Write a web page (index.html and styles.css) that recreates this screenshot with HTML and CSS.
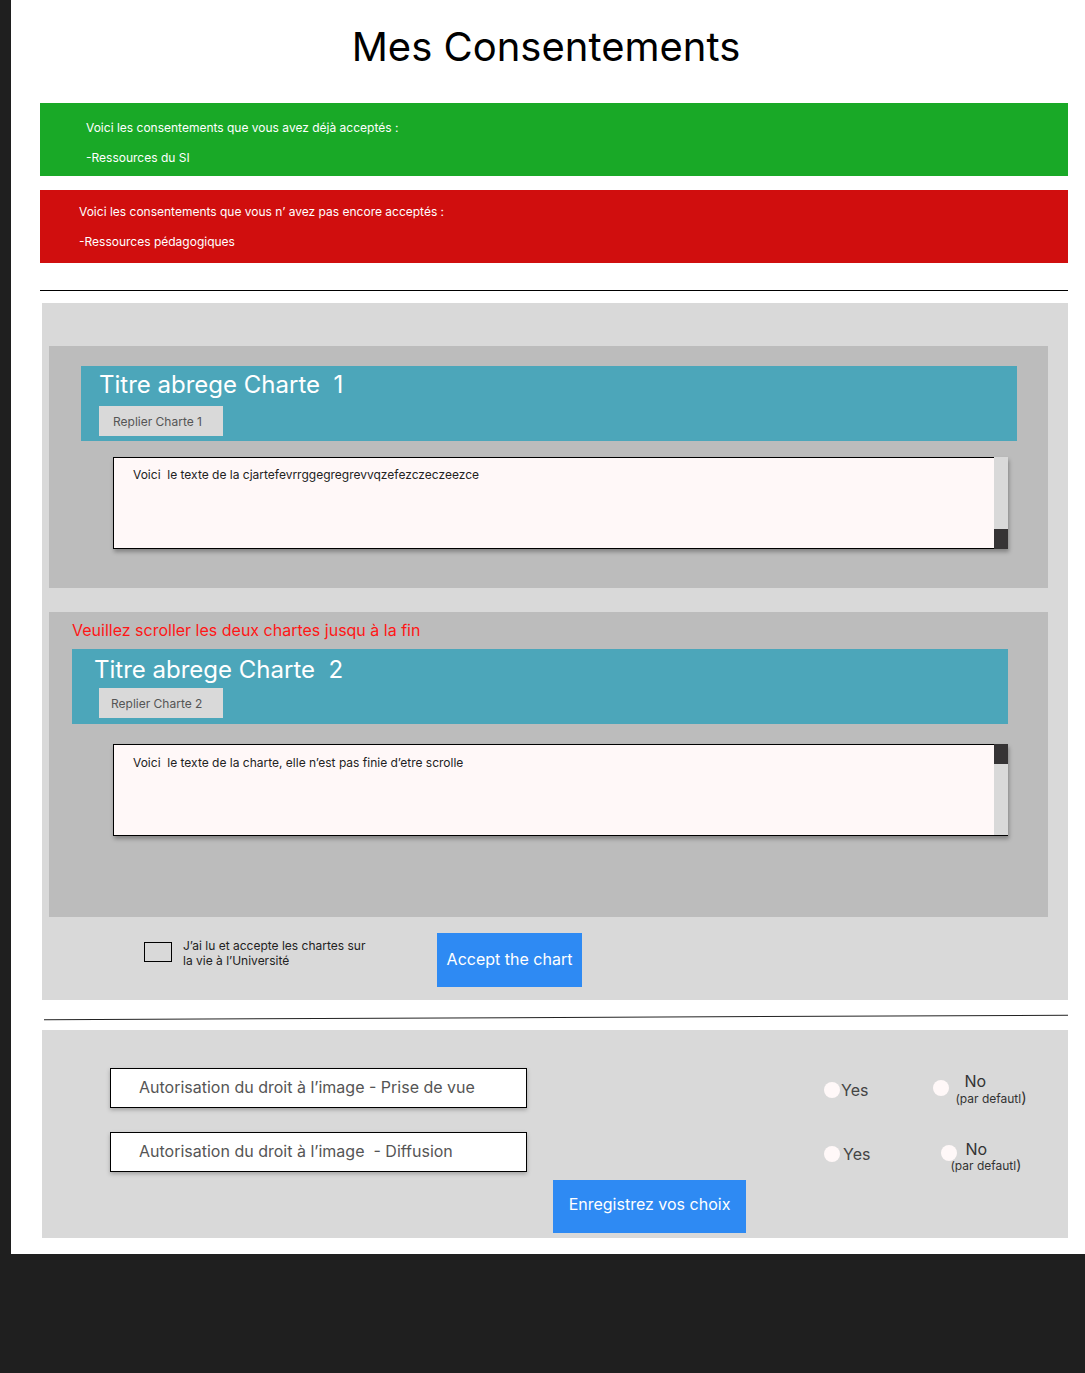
FILE: index.html
```html
<!DOCTYPE html>
<html lang="fr">
<head>
<meta charset="utf-8">
<title>Mes Consentements</title>
<link rel="stylesheet" href="styles.css">
</head>
<body>
<div class="page">
  <h1 class="title">Mes Consentements</h1>

  <div class="banner banner-ok">
    <p>Voici les consentements que vous avez déjà acceptés :</p>
    <p>-Ressources du SI</p>
  </div>
  <div class="banner banner-ko">
    <p>Voici les consentements que vous n’ avez pas encore acceptés :</p>
    <p>-Ressources pédagogiques</p>
  </div>

  <hr class="rule">

  <section class="panel charts">
    <div class="chart chart-1">
      <div class="chart-head">
        <div class="chart-title">Titre abrege Charte&nbsp; 1</div>
        <button class="fold">Replier Charte 1</button>
      </div>
      <div class="textbox">
        <div class="tb-content">Voici&nbsp; le texte de la cjartefevrrggegregrevvqzefezczeczeezce</div>
        <div class="scroll scroll-end"><div class="thumb"></div></div>
      </div>
    </div>

    <div class="chart chart-2">
      <p class="warn">Veuillez scroller les deux chartes jusqu à la fin</p>
      <div class="chart-head">
        <div class="chart-title">Titre abrege Charte&nbsp; 2</div>
        <button class="fold">Replier Charte 2</button>
      </div>
      <div class="textbox">
        <div class="tb-content">Voici&nbsp; le texte de la charte, elle n’est pas finie d’etre scrolle</div>
        <div class="scroll scroll-start"><div class="thumb"></div></div>
      </div>
    </div>

    <div class="accept-row">
      <label class="check">
        <span class="box"></span>
        <span class="check-label">J’ai lu et accepte les chartes sur<br>la vie à l’Université</span>
      </label>
      <button class="btn-blue btn-accept">Accept the chart</button>
    </div>
  </section>

  <div class="rule2"></div>

  <section class="panel rights">
    <div class="right-row row-1">
      <div class="field">Autorisation du droit à l’image - Prise de vue</div>
      <div class="opt opt-yes"><span class="dot"></span>Yes</div>
      <div class="opt opt-no"><span class="dot"></span><span class="no-text"><span class="no">No</span><span class="def">(par defautl<span class="paren">)</span></span></span></div>
    </div>
    <div class="right-row row-2">
      <div class="field">Autorisation du droit à l’image&nbsp; - Diffusion</div>
      <div class="opt opt-yes"><span class="dot"></span>Yes</div>
      <div class="opt opt-no"><span class="dot"></span><span class="no-text"><span class="no">No</span><span class="def">(par defautl<span class="paren">)</span></span></span></div>
    </div>
    <div class="save-row">
      <button class="btn-blue btn-save">Enregistrez vos choix</button>
    </div>
  </section>
</div>
</body>
</html>
```

FILE: styles.css
```css
* { box-sizing: border-box; }

html, body {
  margin: 0;
  padding: 0;
  background: #1f1f1f;
  font-family: Inter, "Noto Sans", "Liberation Sans", sans-serif;
}

.page {
  margin-left: 11px;
  width: 1074px;
  height: 1254px;
  background: #ffffff;
  padding: 0 17px 0 29px;
  overflow: hidden;
}

.title {
  margin: 0;
  padding-top: 22px;
  height: 103px;
  font-size: 40px;
  font-weight: 400;
  line-height: 50px;
  color: #000;
  text-align: center;
  padding-right: 16px;
}

.banner {
  height: 73px;
  color: #fff;
  font-size: 12px;
  line-height: 15px;
  padding-top: 17px;
}
.banner p { margin: 0 0 15px 0; }
.banner-ok { background: #19a927; padding-left: 46px; }
.banner-ko { background: #d00e0e; padding-left: 39px; margin-top: 14px; padding-top: 14px; }

.rule {
  margin: 27px 0 0 0;
  border: 0;
  border-top: 1px solid #000;
  height: 0;
}

.panel {
  background: #d9d9d9;
  margin-left: 2px;
}

.charts {
  margin-top: 12px;
  padding: 43px 20px 0 7px;
  height: 697px;
}

.chart {
  background: #bcbcbc;
}
.chart-1 {
  height: 242px;
  padding: 20px 31px 0 32px;
}
.chart-2 {
  margin-top: 24px;
  height: 305px;
  padding: 10px 40px 0 23px;
}

.warn {
  margin: 0;
  color: #ff1616;
  font-size: 16px;
  line-height: 17px;
  height: 27px;
}

.chart-head {
  background: #4ca6ba;
  height: 75px;
  padding-top: 4px;
}
.chart-1 .chart-head { padding-left: 18px; }
.chart-2 .chart-head { padding-left: 27px; }

.chart-title {
  color: #fff;
  font-size: 24px;
  line-height: 30px;
  height: 36px;
  padding-top: 0;
}
.chart-2 .chart-title { margin-left: -5px; padding-top: 2px; height: 36px; }

.fold {
  display: block;
  border: 0;
  background: #d9d9d9;
  width: 124px;
  height: 30px;
  padding: 0 0 0 14px;
  text-align: left;
  font-family: inherit;
  font-size: 12px;
  color: #555;
}
.chart-2 .fold { padding-left: 12px; margin-top: -1px; }

.textbox {
  display: flex;
  margin-top: 16px;
  height: 92px;
  box-shadow: 1px 3px 4px rgba(0, 0, 0, 0.3);
}
.chart-1 .textbox { margin-left: 32px; margin-right: 9px; }
.chart-2 .textbox { margin-left: 41px; margin-right: 0; margin-top: 20px; }

.tb-content {
  flex: 1;
  background: #fff8f8;
  border: 1px solid #000;
  border-right: 0;
  padding: 9px 19px;
  font-size: 12px;
  line-height: 15px;
  color: #222;
}
.chart-2 .tb-content { padding-top: 10px; }

.scroll {
  width: 14px;
  background: #d9d9d9;
  display: flex;
  flex-direction: column;
}
.scroll-end { justify-content: flex-end; border-top: 1px solid transparent; }
.scroll-start { justify-content: flex-start; border-bottom: 1px solid #000; }
.thumb {
  height: 20px;
  background: #363435;
}

.accept-row {
  display: flex;
  align-items: flex-start;
  height: 83px;
  padding: 16px 0 0 95px;
}

.check {
  display: flex;
  align-items: flex-start;
  width: 293px;
  margin-top: 5px;
}
.box {
  width: 28px;
  height: 20px;
  border: 1px solid #000;
  margin-top: 4px;
  flex: none;
}
.check-label {
  margin-left: 11px;
  font-size: 12px;
  line-height: 15px;
  color: #222;
}

.btn-blue {
  border: 0;
  background: #2e8af3;
  color: #fff;
  font-family: inherit;
  font-size: 16px;
  padding: 0;
}
.btn-accept {
  width: 145px;
  height: 54px;
  padding-bottom: 3px;
}

.rule2 {
  margin: 17px 0 0 4px;
  height: 1px;
  background: #222;
  transform: rotate(-0.25deg);
}

.rights {
  margin-top: 12px;
  height: 208px;
  padding: 38px 0 0 68px;
}

.right-row {
  display: flex;
  align-items: center;
  height: 40px;
}
.row-2 { margin-top: 24px; }

.field {
  width: 417px;
  height: 40px;
  background: #fff;
  border: 1px solid #000;
  box-shadow: 0 2px 4px rgba(0, 0, 0, 0.25);
  padding-left: 28px;
  font-size: 16px;
  line-height: 36px;
  color: #555;
}

.opt {
  display: flex;
  align-items: center;
  font-size: 16px;
  color: #444;
}
.dot {
  display: inline-block;
  width: 16px;
  height: 16px;
  border-radius: 50%;
  background: #fff8f8;
  flex: none;
}

.row-1 .opt-yes { margin-left: 297px; margin-top: 3px; }
.row-1 .opt-yes .dot { margin-right: 1px; }
.row-2 .opt-yes { margin-left: 297px; margin-top: 3px; }
.row-2 .opt-yes .dot { margin-right: 3px; }

.opt-no { align-items: flex-start; }
.no-text {
  display: flex;
  flex-direction: column;
  align-items: flex-start;
}
.no { font-size: 16px; line-height: 16px; color: #333; }
.def { font-size: 12px; line-height: 16px; color: #333; }
.paren { font-size: 15px; }

.row-1 .opt-no { margin-left: 65px; margin-top: 4px; }
.row-1 .opt-no .dot { margin-top: 7px; }
.row-1 .no { margin-left: 15px; }
.row-1 .def { margin-left: 6px; margin-top: 1px; }

.row-2 .opt-no { margin-left: 71px; margin-top: 11px; }
.row-2 .opt-no .dot { margin-top: 3px; }
.row-2 .no { margin-left: 8px; line-height: 14px; }
.row-2 .def { margin-left: -7px; margin-top: 2px; line-height: 14px; }
.row-2 .def .paren { font-size: 14px; line-height: 14px; }

.save-row {
  padding-left: 443px;
  margin-top: 8px;
}
.btn-save {
  width: 193px;
  height: 53px;
  padding-bottom: 5px;
}
```
